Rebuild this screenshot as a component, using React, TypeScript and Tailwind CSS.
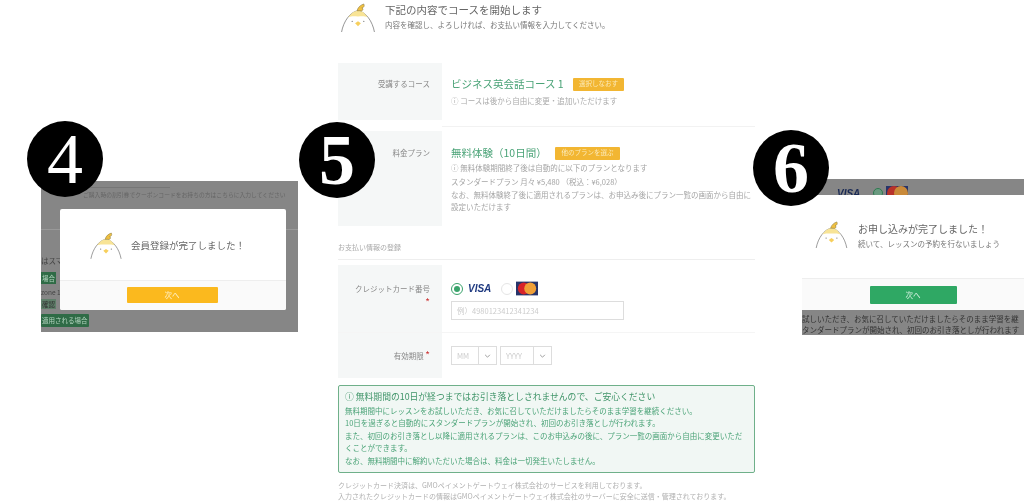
const sans = "font-['Noto_Sans_CJK_JP','Noto_Sans',sans-serif]";

const Chick = ({ className }: { className: string }) => {
  return (
    <svg viewBox="0 0 36 30" className={className} fill="none">
      <path d="M1 30C3 19 10 9 18 8C26 9 33 19 35 30" stroke="#777" strokeWidth="0.8" />
      <path d="M8 15C11 10 15 8 18 8C22 8 25 10 28 15C24 13 21 14 18 14C15 14 12 13 8 15Z" fill="#f8e496" />
      <path d="M17 8C18 4 21 2 24 1C25 3 24 5 22 5C24 6 23 9 20 8Z" fill="#f0c040" stroke="#8a7a40" strokeWidth="0.6" />
      <circle cx="12" cy="19" r="0.7" fill="#777" />
      <circle cx="24" cy="19" r="0.7" fill="#777" />
      <path d="M15 21L18 19L21 21L18 24Z" fill="#f7cf5c" />
    </svg>
  );
};

const Badge = ({ n, className }: { n: string; className: string }) => {
  return (
    <div
      className={`absolute z-10 flex h-[76px] w-[76px] items-center justify-center rounded-full bg-black font-['Liberation_Serif',serif] text-[72px] leading-none text-white ${className}`}
    >
      {n}
    </div>
  );
};

const Label = ({ children, className }: { children: React.ReactNode; className: string }) => {
  return (
    <div className={`w-[104px] shrink-0 bg-[#f5f7f7] pr-[12px] text-right text-[7.5px] text-[#888] ${className}`}>
      {children}
    </div>
  );
};

const SmallButton = ({ children, className }: { children: React.ReactNode; className: string }) => {
  return (
    <span className={`flex h-[13px] items-center justify-center rounded-[1px] bg-[#f2b632] text-[6.5px] text-[#fbe9b8] ${className}`}>
      {children}
    </span>
  );
};

const Select = ({ text, className }: { text: string; className: string }) => {
  return (
    <div className={`flex h-[19px] items-center border border-[#ddd] text-[7.5px] text-[#ccc] ${className}`}>
      <span className="flex-1 pl-[5px]">{text}</span>
      <span className="flex h-full w-[18px] items-center justify-center border-l border-[#ddd]">
        <svg viewBox="0 0 8 5" className="h-[4px] w-[7px]" fill="none" stroke="#888" strokeWidth="1">
          <path d="M1 1L4 4L7 1" />
        </svg>
      </span>
    </div>
  );
};

const DialogFour = () => {
  return (
    <div className="absolute left-[41px] top-[181px] h-[151px] w-[257px] overflow-hidden bg-[#868686]">
      <div className="absolute left-[42px] top-[6px] h-px w-[87px] bg-[#777]"></div>
      <div className="absolute left-[42px] top-[10px] whitespace-nowrap text-[5.8px] text-[#666]">
        ご購入時の割引券でクーポンコードをお持ちの方はこちらに入力してください
      </div>
      <div className="absolute left-0 top-[48px] h-px w-full bg-[#999]"></div>
      <div className="absolute left-0 top-[74px] text-[7.5px] text-[#444]">はスマ</div>
      <div className="absolute left-0 top-[91px] bg-[#2f6b46] px-[1px] text-[6.5px] leading-[12px] text-[#b5d5c0]">場合</div>
      <div className="absolute left-0 top-[107px] text-[6.5px] text-[#444]">zone 1</div>
      <div className="absolute left-0 top-[118px] bg-[#5f7f6a] px-[1px] text-[6.5px] leading-[10px] text-[#333]">確認</div>
      <div className="absolute left-0 top-[133px] rounded-[1px] bg-[#2f6b46] px-[1px] text-[6.5px] leading-[13px] text-[#b5d5c0]">
        適用される場合
      </div>
      <div className="absolute left-[19px] top-[28px] flex h-[101px] w-[226px] flex-col overflow-hidden rounded-[2px] bg-white">
        <div className="flex h-[71px] items-center pl-[30px] pt-[1px]">
          <Chick className="h-[27px] w-[32px]" />
          <span className="ml-[9px] text-[9.5px] text-[#666]">会員登録が完了しました！</span>
        </div>
        <div className="flex flex-1 justify-center border-t border-[#eee] bg-[#fafafa] pr-[2px] pt-[6px]">
          <div className="flex h-[16px] w-[91px] items-center justify-center rounded-[1px] bg-[#fbb91e] text-[7.5px] text-[#fff1c9]">
            次へ
          </div>
        </div>
      </div>
    </div>
  );
};

const Form = () => {
  return (
    <div className="absolute left-[338px] top-0 flex w-[417px] flex-col">
      <div className="flex h-[35px] items-start pl-[2px] pt-[3px]">
        <Chick className="h-[29px] w-[36px]" />
        <div className="ml-[9px] flex flex-col">
          <span className="text-[10.5px] leading-[14px] text-[#666]">下記の内容でコースを開始します</span>
          <span className="mt-[2px] text-[7.5px] leading-[11px] text-[#777]">内容を確認し、よろしければ、お支払い情報を入力してください。</span>
        </div>
      </div>

      <div className="mt-[28px] flex h-[57px]">
        <Label className="pt-[15px] leading-[11px]">受講するコース</Label>
        <div className="ml-[9px] flex flex-col pt-[12px]">
          <div className="flex items-center">
            <span className="w-[113px] whitespace-nowrap text-[10.5px] leading-[18px] text-[#4aa377]">ビジネス英会話コース 1</span>
            <SmallButton className="ml-[9px] w-[51px]">選択しなおす</SmallButton>
          </div>
          <span className="mt-[2px] text-[7.5px] leading-[11px] text-[#aaa]">ⓘ コースは後から自由に変更・追加いただけます</span>
        </div>
      </div>
      <div className="ml-[104px] mt-[6px] h-px bg-[#f2f2f2]"></div>

      <div className="mt-[4px] flex h-[95px]">
        <Label className="pt-[16px] leading-[11px]">料金プラン</Label>
        <div className="ml-[9px] flex flex-col pt-[13px]">
          <div className="flex items-center">
            <span className="w-[104px] whitespace-nowrap text-[10.5px] leading-[18px] text-[#4aa377]">無料体験（10日間）</span>
            <SmallButton className="ml-0 w-[65px]">他のプランを選ぶ</SmallButton>
          </div>
          <div className="mt-[-1px] flex w-[304px] flex-col text-[7.5px] leading-[14px] text-[#a5a5a5]">
            <span>ⓘ 無料体験期間終了後は自動的に以下のプランとなります</span>
            <span>スタンダードプラン 月々 ¥5,480 （税込：¥6,028）</span>
            <span className="leading-[12px]">なお、無料体験終了後に適用されるプランは、お申込み後にプラン一覧の画面から自由に設定いただけます</span>
          </div>
        </div>
      </div>

      <div className="mt-[16px] border-b border-[#eee] pb-[7px] text-[7px] leading-[10px] text-[#aaa]">お支払い情報の登録</div>

      <div className="mt-[5px] flex h-[68px] border-b border-[#f5f5f5]">
        <Label className="pt-[18px] leading-[11px]">
          クレジットカード番号
          <div className="mt-[3px] text-[10px] leading-[10px] text-[#c33]">*</div>
        </Label>
        <div className="ml-[9px] flex flex-col pt-[16px]">
          <div className="flex h-[15px] items-center">
            <span className="flex h-[12px] w-[12px] items-center justify-center rounded-full border border-[#3aa36b]">
              <span className="h-[6px] w-[6px] rounded-full bg-[#3aa36b]"></span>
            </span>
            <span className="ml-[5px] font-['Liberation_Sans',sans-serif] text-[10px] font-bold italic text-[#1f3a80]">VISA</span>
            <span className="ml-[10px] h-[12px] w-[12px] rounded-full border border-[#e5e5e5]"></span>
            <svg viewBox="0 0 24 15" className="ml-[3px] h-[15px] w-[22px]">
              <rect width="24" height="15" fill="#27346a" />
              <circle cx="8.5" cy="7.5" r="6.5" fill="#d8232a" />
              <circle cx="15.5" cy="7.5" r="6.5" fill="#f0a038" />
            </svg>
          </div>
          <div className="mt-[5px] flex h-[19px] w-[173px] items-center border border-[#ddd] pl-[5px] text-[7.5px] text-[#ccc]">
            例）4980123412341234
          </div>
        </div>
      </div>

      <div className="flex h-[45px]">
        <Label className="pt-[17px] leading-[11px]">
          有効期限 <span className="text-[10px] leading-[10px] text-[#c33]">*</span>
        </Label>
        <div className="ml-[9px] flex gap-[3px] pt-[13px]">
          <Select text="MM" className="w-[46px]" />
          <Select text="YYYY" className="w-[52px]" />
        </div>
      </div>

      <div className="mt-[7px] flex h-[88px] flex-col rounded-[2px] border border-[#6fb08a] bg-[#f1f7f4] px-[6px] pt-[4px] text-[7.5px] leading-[12px] text-[#4aa377]">
        <span className="text-[8.8px] leading-[14px] text-[#3f9468]">ⓘ 無料期間の10日が経つまではお引き落としされませんので、ご安心ください</span>
        <span className="mt-[1px]">無料期間中にレッスンをお試しいただき、お気に召していただけましたらそのまま学習を継続ください。</span>
        <span>10日を過ぎると自動的にスタンダードプランが開始され、初回のお引き落としが行われます。</span>
        <span className="mt-[1px]">また、初回のお引き落とし以降に適用されるプランは、このお申込みの後に、プラン一覧の画面から自由に変更いただくことができます。</span>
        <span className="mt-[1px]">なお、無料期間中に解約いただいた場合は、料金は一切発生いたしません。</span>
      </div>

      <div className="mt-[7px] flex flex-col whitespace-nowrap text-[7px] leading-[10.5px] text-[#b0b0b0]">
        <span>クレジットカード決済は、GMOペイメントゲートウェイ株式会社のサービスを利用しております。</span>
        <span>入力されたクレジットカードの情報はGMOペイメントゲートウェイ株式会社のサーバーに安全に送信・管理されております。</span>
      </div>
    </div>
  );
};

const DialogSix = () => {
  return (
    <div className="absolute left-[802px] top-[179px] flex h-[156px] w-[222px] flex-col overflow-hidden bg-[#868686]">
      <div className="flex h-[16px] items-start overflow-hidden pl-[35px] pt-[7px]">
        <span className="font-['Liberation_Sans',sans-serif] text-[10px] font-bold italic text-[#1a2a55]">VISA</span>
        <span className="ml-[13px] mt-[2px] h-[10px] w-[10px] rounded-full border border-[#2f7a50] bg-[#6a9a80]"></span>
        <svg viewBox="0 0 22 14" className="ml-[3px] h-[14px] w-[22px]">
          <rect width="22" height="14" fill="#27346a" />
          <circle cx="8" cy="7" r="7" fill="#b8322a" />
          <circle cx="15" cy="7" r="7" fill="#c98a3a" />
        </svg>
      </div>
      <div className="flex h-[115px] flex-col bg-white">
        <div className="flex h-[83px] items-start pl-[12px] pt-[26px]">
          <Chick className="h-[27px] w-[35px]" />
          <div className="ml-[9px] flex flex-col">
            <span className="text-[10px] leading-[15px] text-[#666]">お申し込みが完了しました！</span>
            <span className="mt-[2px] text-[7.5px] leading-[11px] text-[#777]">続いて、レッスンの予約を行ないましょう</span>
          </div>
        </div>
        <div className="flex flex-1 justify-center border-t border-[#eee] bg-[#fafafa] pt-[7px]">
          <div className="flex h-[18px] w-[87px] items-center justify-center rounded-[1px] bg-[#2fa864] text-[7.5px] text-[#d5f0e0]">
            次へ
          </div>
        </div>
      </div>
      <div className="flex flex-col whitespace-nowrap pt-[3px] text-[7.5px] leading-[11px] text-[#333]">
        <span>試しいただき、お気に召していただけましたらそのまま学習を継</span>
        <span>タンダードプランが開始され、初回のお引き落としが行われます</span>
      </div>
    </div>
  );
};

export default function App() {
  return (
    <div className={`relative h-[501px] w-[1024px] overflow-hidden bg-white blur-[0.3px] ${sans}`}>
      <DialogFour />
      <Form />
      <DialogSix />
      <Badge n="4" className="left-[27px] top-[121px]" />
      <Badge n="5" className="left-[299px] top-[122px] font-bold" />
      <Badge n="6" className="left-[753px] top-[130px] font-bold" />
    </div>
  );
}
